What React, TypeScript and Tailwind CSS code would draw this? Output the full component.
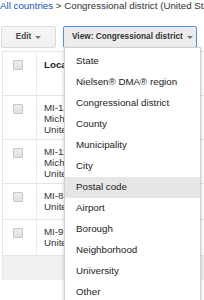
import type { ReactNode } from 'react';

const viewOptions = [
  'State',
  'Nielsen® DMA® region',
  'Congressional district',
  'County',
  'Municipality',
  'City',
  'Postal code',
  'Airport',
  'Borough',
  'Neighborhood',
  'University',
  'Other',
];

const rows = [
  { id: 'mi14', lines: ['MI-14,', 'Michigan,', 'United States'], h: 'h-[44px]' },
  { id: 'mi11', lines: ['MI-11,', 'Michigan,', 'United States'], h: 'h-[44px]' },
  { id: 'mi8', lines: ['MI-8, Michigan,', 'United States'], h: 'h-[36px]' },
  { id: 'mi9', lines: ['MI-9, Michigan,', 'United States'], h: 'h-[36px]' },
];

function Caret() {
  return <span className="inline-block w-0 h-0 border-l-[3px] border-r-[3px] border-t-[3px] border-l-transparent border-r-transparent border-t-[#777]" />;
}

function Checkbox() {
  return <div className="w-[10px] h-[10px] rounded-[1px] border border-[#c6c6c6] bg-gradient-to-b from-[#efefef] to-[#e2e2e2]" />;
}

function Row({ height, children }: { height: string; children: ReactNode }) {
  return (
    <div className={`flex ${height} border-b border-[#e5e5e5]`}>
      <div className="w-[34px] shrink-0 pl-[10px] pt-[8px] border-r border-[#ebebeb]">
        <Checkbox />
      </div>
      <div className="pl-[7px] pt-[6px] leading-[11px]">{children}</div>
    </div>
  );
}

export default function App() {
  return (
    <div className="relative w-[204px] h-[300px] overflow-hidden bg-white font-['Liberation_Sans',Arial,sans-serif]">
      {/* breadcrumb */}
      <div className="whitespace-nowrap text-[9.75px] leading-[12px] text-[#333]">
        <span className="text-[#15c]">All countries</span> &gt; Congressional district (United States)
      </div>

      {/* toolbar */}
      <div className="flex gap-[7px] mt-[14px] pl-[1px]">
        <div className="flex items-center justify-center gap-[4px] w-[55px] h-[22px] rounded-[2px] border border-[#dcdcdc] bg-gradient-to-b from-[#f5f5f5] to-[#f1f1f1] text-[8.25px] font-bold text-[#444]">
          Edit <Caret />
        </div>
        <div className="relative">
          <div className="flex items-center gap-[4px] w-[134px] h-[22px] pl-[8px] rounded-[2px] border border-[#4d90fe] bg-[#ececec] text-[8.25px] font-bold text-[#333] whitespace-nowrap">
            View: Congressional district <Caret />
          </div>
          <div className="absolute left-[1px] top-[21px] z-10 w-[137px] pt-[3px] bg-white border border-[#d0d0d0] shadow-[0_2px_4px_rgba(0,0,0,0.2)]">
            {viewOptions.map(opt => (
              <div
                key={opt}
                className={`h-[21px] pl-[11px] flex items-center whitespace-nowrap text-[9.75px] text-[#222] ${opt === 'Postal code' ? 'bg-[#e6e6e6]' : ''}`}
              >
                {opt}
              </div>
            ))}
          </div>
        </div>
      </div>

      {/* table */}
      <div className="mt-[3px] ml-[2px] w-[400px] border-l border-t border-[#e5e5e5] text-[9.75px] text-[#333]">
        <div className="flex h-[44px] border-b border-[#e5e5e5]">
          <div className="w-[34px] shrink-0 pl-[10px] pt-[8px] border-r border-[#ebebeb]">
            <Checkbox />
          </div>
          <div className="pl-[7px] pt-[7px] leading-[11px] font-bold text-[#222]">Location</div>
        </div>
        {rows.map(r => (
          <Row key={r.id} height={r.h}>
            {r.lines.map(l => (
              <div key={l} className="whitespace-nowrap">{l}</div>
            ))}
          </Row>
        ))}
        <div className="h-[24px] bg-[#f1f1f1]" />
      </div>
    </div>
  );
}
